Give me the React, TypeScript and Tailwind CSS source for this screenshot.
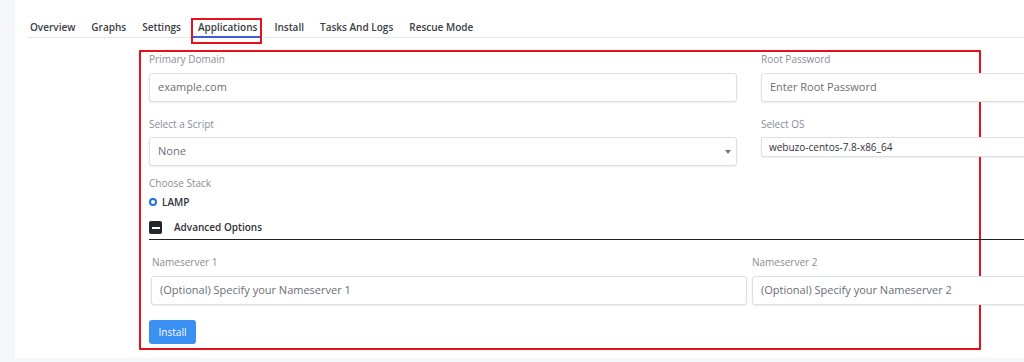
const tabs = ["Overview", "Graphs", "Settings", "Applications", "Install", "Tasks And Logs", "Rescue Mode"];

const Label = (props: { children: string; className?: string }) => (
  <div className={`text-[10px] leading-[12px] text-[#8a8d93] ${props.className ?? ""}`}>{props.children}</div>
);

const TextBox = (props: { placeholder: string; className?: string }) => (
  <div
    className={`h-[29px] border border-[#dcdfe4] rounded-[3px] bg-white shadow-[0_1px_2px_rgba(0,0,0,0.08)] flex items-center px-[8px] text-[11px] text-[#6b6e74] whitespace-nowrap ${props.className ?? ""}`}
  >
    {props.placeholder}
  </div>
);

export default function App() {
  return (
    <div
      className="w-[1024px] h-[362px] overflow-hidden bg-[#f4f6fa] flex"
      style={{ fontFamily: '"Open Sans", "Liberation Sans", sans-serif' }}
    >
      <div className="w-[15px] shrink-0" />
      <div className="flex-1 bg-white h-[358px] overflow-hidden">
        {/* tabs */}
        <div className="ml-[12px] mt-[15px] border-b border-[#e4e6ea] flex items-end h-[23px] pl-[3px] gap-[16px] text-[10px] font-semibold text-[#3a3d42] whitespace-nowrap">
          {tabs.map((t) =>
            t === "Applications" ? (
              <div key={t} className="relative h-full flex items-start pt-[5px] px-[1px]">
                <span>{t}</span>
                <div className="absolute left-[-6px] right-[-4px] top-[3px] h-[26px] border-2 border-[#e8101a]" />
                <div className="absolute left-[-4px] right-[-2px] bottom-[-1px] h-[2px] bg-[#3d5bd6]" />
              </div>
            ) : (
              <div key={t} className="h-full flex items-start pt-[5px]">
                {t}
              </div>
            )
          )}
        </div>

        {/* form */}
        <div className="ml-[124px] mt-[12px] w-[842px] h-[300px] border-2 border-[#e8101a] pl-[8px] pt-[1px] overflow-visible">
          <div className="flex gap-[24px]">
            <div className="w-[588px] shrink-0">
              <Label>Primary Domain</Label>
              <TextBox className="mt-[8px]" placeholder="example.com" />
              <Label className="mt-[16px]">Select a Script</Label>
              <div className="mt-[7px] relative">
                <TextBox className="text-[#2f3237] font-medium" placeholder="None" />
                <div className="absolute right-[6px] top-[13px] w-0 h-0 border-l-[3px] border-r-[3px] border-t-[4px] border-l-transparent border-r-transparent border-t-[#777]" />
              </div>
            </div>
            <div className="w-[300px] shrink-0">
              <Label>Root Password</Label>
              <TextBox className="mt-[8px]" placeholder="Enter Root Password" />
              <Label className="mt-[16px]">Select OS</Label>
              <div className="mt-[7px] h-[20px] border border-[#dcdfe4] rounded-[2px] bg-white shadow-[0_1px_2px_rgba(0,0,0,0.08)] flex items-center px-[7px] text-[10px] text-[#2f3237] whitespace-nowrap">
                webuzo-centos-7.8-x86_64
              </div>
            </div>
          </div>

          <Label className="mt-[11px]">Choose Stack</Label>
          <div className="mt-[7px] flex items-center gap-[5px] h-[12px]">
            <div className="w-[8px] h-[8px] rounded-full border-[2.5px] border-[#1a73e8] bg-white" />
            <span className="text-[10px] font-semibold text-[#2f3237]">LAMP</span>
          </div>

          <div className="mt-[13px] w-[900px] border-b border-[#222] pb-[5px] flex items-center gap-[12px] h-[19px]">
            <div className="w-[13px] h-[13px] rounded-[2px] bg-[#23262b] flex items-center justify-center">
              <div className="w-[8px] h-[2px] bg-white" />
            </div>
            <span className="text-[10px] font-semibold text-[#2f3237]">Advanced Options</span>
          </div>

          <div className="mt-[16px] ml-[2px] flex gap-[5px]">
            <div className="w-[596px] shrink-0">
              <Label className="pl-[1px]">Nameserver 1</Label>
              <TextBox className="mt-[8px]" placeholder="(Optional) Specify your Nameserver 1" />
            </div>
            <div className="w-[300px] shrink-0">
              <Label>Nameserver 2</Label>
              <TextBox className="mt-[8px]" placeholder="(Optional) Specify your Nameserver 2" />
            </div>
          </div>

          <button className="mt-[15px] h-[24px] w-[47px] rounded-[3px] bg-[#3b8ef2] text-white text-[10px] font-medium">
            Install
          </button>
        </div>
      </div>
    </div>
  );
}
